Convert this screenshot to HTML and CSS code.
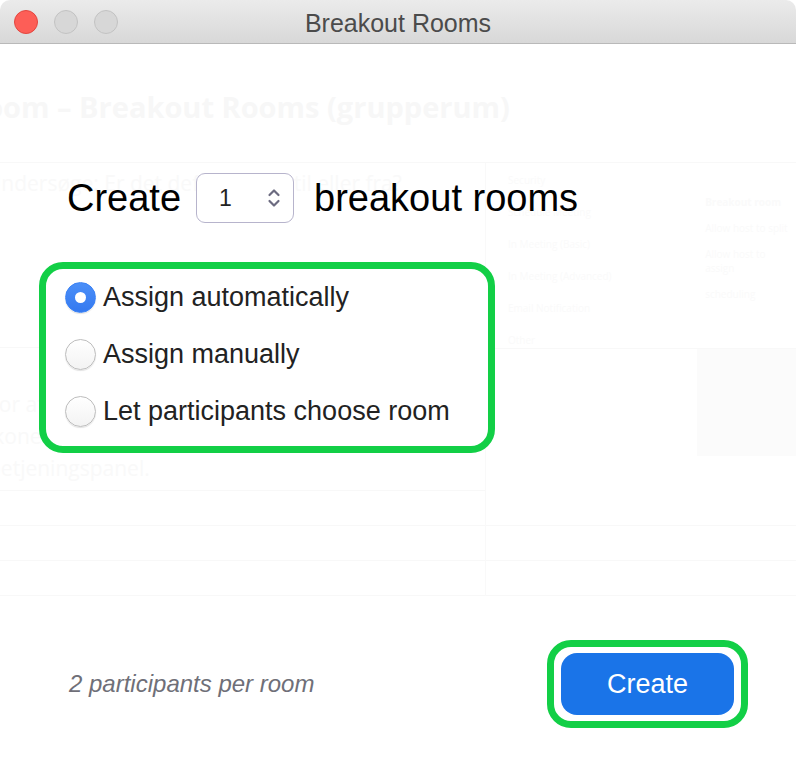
FILE: index.html
```html
<!DOCTYPE html>
<html lang="en">
<head>
    <meta charset="UTF-8">
    <meta name="viewport" content="width=device-width, initial-scale=1.0">
    <title>Breakout Rooms</title>
    <link rel="stylesheet" href="styles.css">
</head>
<body>
    <div class="window">
        <header class="titlebar">
            <div class="lights">
                <span class="light red"></span>
                <span class="light"></span>
                <span class="light"></span>
            </div>
            <h1>Breakout Rooms</h1>
        </header>

        <div class="body">
            <!-- the web page behind the dialog, showing through faintly -->
            <div class="ghost" aria-hidden="true">
                <h2>Room &ndash; Breakout Rooms (grupperum)</h2>
                <div class="ghost-table">
                    <div class="ghost-left">
                        <p class="ghost-q">Undersøge: Er det default slået til eller fra?</p>
                        <div class="ghost-para">
                            <p>For at oprette grupperum, skal du klikke på</p>
                            <p>ikonet "Breakout Rooms" i mødets</p>
                            <p>betjeningspanel.</p>
                        </div>
                        <div class="ghost-row"></div>
                        <div class="ghost-row"></div>
                        <div class="ghost-row"></div>
                    </div>
                    <div class="ghost-right">
                        <div class="ghost-menu">
                            <ul>
                                <li>Security</li>
                                <li>Schedule Meeting</li>
                                <li>In Meeting (Basic)</li>
                                <li>In Meeting (Advanced)</li>
                                <li>Email Notification</li>
                                <li>Other</li>
                            </ul>
                            <div class="ghost-setting">
                                <b>Breakout room</b>
                                <span>Allow host to split</span>
                                <span>Allow host to assign</span>
                                <span>scheduling</span>
                            </div>
                        </div>
                        <div class="ghost-shot"></div>
                        <div class="ghost-row"></div>
                        <div class="ghost-row"></div>
                        <div class="ghost-row"></div>
                    </div>
                </div>
            </div>

            <div class="create-row">
                <span>Create</span>
                <div class="stepper">
                    <span class="stepper-value">1</span>
                    <svg class="stepper-arrows" width="14" height="24" viewBox="0 0 14 24">
                        <path d="M2.5 9 L7 4.5 L11.5 9" fill="none" stroke="#6c6b80" stroke-width="2.2" stroke-linecap="round" stroke-linejoin="round"/>
                        <path d="M2.5 15 L7 19.5 L11.5 15" fill="none" stroke="#6c6b80" stroke-width="2.2" stroke-linecap="round" stroke-linejoin="round"/>
                    </svg>
                </div>
                <span>breakout rooms</span>
            </div>

            <div class="options">
                <label class="option">
                    <span class="radio checked"></span>
                    Assign automatically
                </label>
                <label class="option">
                    <span class="radio"></span>
                    Assign manually
                </label>
                <label class="option">
                    <span class="radio"></span>
                    Let participants choose room
                </label>
            </div>

            <footer class="footer">
                <span class="per-room">2 participants per room</span>
                <div class="create-ring">
                    <button class="create-btn">Create</button>
                </div>
            </footer>
        </div>
    </div>
</body>
</html>
```

FILE: styles.css
```css
body {
    margin: 0;
    background-color: #fff;
    font-family: "Liberation Sans", Arial, sans-serif;
    color: #1d1d1f;
}

.window {
    width: 796px;
    height: 762px;
    border-radius: 10px 10px 6px 6px;
    overflow: hidden;
    display: flex;
    flex-direction: column;
    background-color: #fff;
}

.titlebar {
    height: 43px;
    border-bottom: 1px solid #b9b9b9;
    background: linear-gradient(#ebebeb, #d8d8d8);
    display: flex;
    align-items: center;
    position: relative;
}

.lights {
    display: flex;
    gap: 16px;
    padding-left: 14px;
}

.light {
    width: 22px;
    height: 22px;
    border-radius: 50%;
    background-color: #d7d7d7;
    border: 1px solid #c2c2c2;
}

.light.red {
    background-color: #fd5e57;
    border-color: #e2463f;
}

.titlebar h1 {
    position: absolute;
    left: 0;
    right: 0;
    top: 9px;
    margin: 0;
    text-align: center;
    font-size: 25px;
    font-weight: normal;
    color: #4b4b4b;
}

.body {
    flex: 1;
    position: relative;
    display: flex;
    flex-direction: column;
    padding: 129px 48px 34px 39px;
}

/* faint page behind the dialog */
.ghost {
    position: absolute;
    inset: 0;
    color: #f9f9f9;
    font-family: "Open Sans", sans-serif;
}

.ghost h2 {
    margin: 43px 0 0 -34px;
    height: 75px;
    font-size: 29px;
    font-weight: 700;
    color: #f7f7f7;
}

.ghost-table {
    display: flex;
    border-top: 1px solid #f8f8f8;
}

.ghost-left {
    width: 485px;
    border-right: 1px solid #f9f9f9;
}

.ghost-right {
    flex: 1;
}

.ghost p {
    margin: 0;
}

.ghost-q {
    height: 185px;
    padding: 6px 0 0 0;
    margin-left: -14px !important;
    font-size: 21px;
    box-sizing: border-box;
    border-bottom: 1px solid #f8f8f8;
}

.ghost-para {
    height: 143px;
    padding-top: 40px;
    margin-left: -12px;
    box-sizing: border-box;
    font-size: 21px;
    line-height: 32px;
    border-bottom: 1px solid #f8f8f8;
}

.ghost-row {
    height: 34px;
    border-bottom: 1px solid #f8f8f8;
}

.ghost-menu {
    height: 185px;
    display: flex;
    font-size: 10px;
    color: #fafafa;
    border-bottom: 1px solid #f8f8f8;
}

.ghost-menu ul {
    list-style: none;
    margin: 0;
    padding: 10px 0 0 22px;
    width: 200px;
}

.ghost-menu li {
    height: 32px;
}

.ghost-setting {
    display: flex;
    flex-direction: column;
    gap: 12px;
    padding-top: 32px;
}

.ghost-shot {
    height: 107px;
    margin-left: 211px;
    margin-bottom: 35px;
    background-color: #fbfbfb;
}

/* dialog content */
.create-row {
    position: relative;
    display: flex;
    align-items: center;
    margin-left: 28px;
    font-size: 38px;
    color: #000;
}

.stepper {
    width: 98px;
    height: 50px;
    margin: 0 20px 0 15px;
    border: 1.5px solid #b7b4cc;
    border-radius: 9px;
    display: flex;
    align-items: center;
    justify-content: space-between;
    padding: 0 12px 0 22px;
    box-sizing: border-box;
    background-color: #fff;
}

.stepper-value {
    font-size: 23px;
    color: #222;
}

.options {
    position: relative;
    box-sizing: border-box;
    width: 456px;
    height: 191px;
    margin-top: 39px;
    border: 7px solid #12cf46;
    border-radius: 24px;
    background-color: #fff;
    padding-left: 19px;
}

.option {
    height: 57px;
    display: flex;
    align-items: center;
    gap: 7px;
    font-size: 27px;
    color: #222;
}

.radio {
    flex: none;
    width: 29px;
    height: 29px;
    border-radius: 50%;
    border: 1px solid #bdbdbd;
    background: linear-gradient(#fff, #f3f3f3);
    box-shadow: 0 1px 1px rgba(0, 0, 0, 0.12);
    display: flex;
    align-items: center;
    justify-content: center;
}

.radio.checked {
    border-color: #3b82f5;
    background: linear-gradient(#4b8ff8, #3479f0);
}

.radio.checked::after {
    content: "";
    width: 11px;
    height: 11px;
    border-radius: 50%;
    background-color: #fff;
}

.footer {
    position: relative;
    margin-top: auto;
    display: flex;
    align-items: center;
    justify-content: space-between;
    padding-left: 30px;
}

.per-room {
    font-size: 24px;
    font-style: italic;
    color: #6f6f78;
}

.create-ring {
    border: 7px solid #12cf46;
    border-radius: 24px;
    padding: 6px 7px;
    background-color: #fff;
}

.create-btn {
    display: block;
    width: 173px;
    height: 62px;
    border: none;
    border-radius: 16px;
    background-color: #1a74e8;
    color: #fff;
    font-family: "Liberation Sans", Arial, sans-serif;
    font-size: 27px;
}
```
